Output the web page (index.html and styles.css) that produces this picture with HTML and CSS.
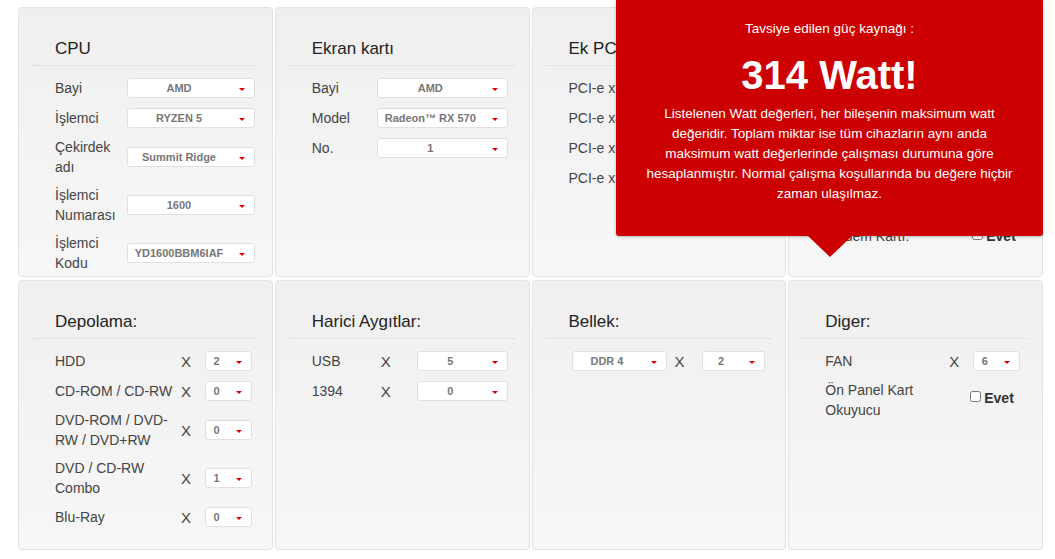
FILE: index.html
```html
<!DOCTYPE html>
<html lang="tr">

<head>
    <meta charset="UTF-8" />
    <meta name="viewport" content="width=device-width, initial-scale=1.0" />
    <title>Güç Kaynağı Hesaplama</title>
    <link rel="stylesheet" href="styles.css">
</head>

<body>
    <div class="calc">
        <div class="grid">

            <!-- CPU -->
            <div class="card">
                <h3 class="card-head">CPU</h3>
                <div class="card-body">
                    <div class="row cols-cpu">
                        <span class="lbl">Bayi</span>
                        <div class="sel"><span class="val">AMD</span><i class="caret"></i></div>
                    </div>
                    <div class="row cols-cpu">
                        <span class="lbl">İşlemci</span>
                        <div class="sel"><span class="val">RYZEN 5</span><i class="caret"></i></div>
                    </div>
                    <div class="row cols-cpu">
                        <span class="lbl">Çekirdek adı</span>
                        <div class="sel"><span class="val">Summit Ridge</span><i class="caret"></i></div>
                    </div>
                    <div class="row cols-cpu">
                        <span class="lbl">İşlemci Numarası</span>
                        <div class="sel"><span class="val">1600</span><i class="caret"></i></div>
                    </div>
                    <div class="row cols-cpu">
                        <span class="lbl">İşlemci Kodu</span>
                        <div class="sel"><span class="val">YD1600BBM6IAF</span><i class="caret"></i></div>
                    </div>
                </div>
            </div>

            <!-- Ekran karti -->
            <div class="card">
                <h3 class="card-head">Ekran kartı</h3>
                <div class="card-body">
                    <div class="row cols-gpu">
                        <span class="lbl">Bayi</span>
                        <div class="sel"><span class="val">AMD</span><i class="caret"></i></div>
                    </div>
                    <div class="row cols-gpu">
                        <span class="lbl">Model</span>
                        <div class="sel"><span class="val">Radeon™ RX 570</span><i class="caret"></i></div>
                    </div>
                    <div class="row cols-gpu">
                        <span class="lbl">No.</span>
                        <div class="sel"><span class="val">1</span><i class="caret"></i></div>
                    </div>
                </div>
            </div>

            <!-- Ek PCI -->
            <div class="card">
                <h3 class="card-head">Ek PCI Kartları</h3>
                <div class="card-body">
                    <div class="row cols-pci">
                        <span class="lbl">PCI-e x1</span>
                    </div>
                    <div class="row cols-pci">
                        <span class="lbl">PCI-e x4</span>
                    </div>
                    <div class="row cols-pci">
                        <span class="lbl">PCI-e x8</span>
                    </div>
                    <div class="row cols-pci">
                        <span class="lbl">PCI-e x16</span>
                    </div>
                </div>
            </div>

            <!-- Ek kartlar -->
            <div class="card">
                <h3 class="card-head">Diğer Kartlar:</h3>
                <div class="card-body card-body-late">
                    <div class="row cols-other">
                        <span class="lbl">Modem Kartı:</span>
                        <label class="chk"><input type="checkbox"> Evet</label>
                    </div>
                </div>
            </div>

            <!-- Depolama -->
            <div class="card">
                <h3 class="card-head">Depolama:</h3>
                <div class="card-body">
                    <div class="row cols-store">
                        <span class="lbl">HDD</span><span class="x">X</span>
                        <div class="sel"><span class="val">2</span><i class="caret"></i></div>
                    </div>
                    <div class="row cols-store">
                        <span class="lbl">CD-ROM / CD-RW</span><span class="x">X</span>
                        <div class="sel"><span class="val">0</span><i class="caret"></i></div>
                    </div>
                    <div class="row cols-store">
                        <span class="lbl">DVD-ROM / DVD-RW / DVD+RW</span><span class="x">X</span>
                        <div class="sel"><span class="val">0</span><i class="caret"></i></div>
                    </div>
                    <div class="row cols-store">
                        <span class="lbl">DVD / CD-RW Combo</span><span class="x">X</span>
                        <div class="sel"><span class="val">1</span><i class="caret"></i></div>
                    </div>
                    <div class="row cols-store">
                        <span class="lbl">Blu-Ray</span><span class="x">X</span>
                        <div class="sel"><span class="val">0</span><i class="caret"></i></div>
                    </div>
                </div>
            </div>

            <!-- Harici -->
            <div class="card">
                <h3 class="card-head">Harici Aygıtlar:</h3>
                <div class="card-body">
                    <div class="row cols-ext">
                        <span class="lbl">USB</span><span class="x">X</span>
                        <div class="sel"><span class="val">5</span><i class="caret"></i></div>
                    </div>
                    <div class="row cols-ext">
                        <span class="lbl">1394</span><span class="x">X</span>
                        <div class="sel"><span class="val">0</span><i class="caret"></i></div>
                    </div>
                </div>
            </div>

            <!-- Bellek -->
            <div class="card">
                <h3 class="card-head">Bellek:</h3>
                <div class="card-body">
                    <div class="row cols-mem">
                        <div class="sel"><span class="val">DDR 4</span><i class="caret"></i></div>
                        <span class="x">X</span>
                        <div class="sel"><span class="val">2</span><i class="caret"></i></div>
                    </div>
                </div>
            </div>

            <!-- Diger -->
            <div class="card">
                <h3 class="card-head">Diger:</h3>
                <div class="card-body">
                    <div class="row cols-misc">
                        <span class="lbl">FAN</span><span class="x">X</span>
                        <div class="sel"><span class="val">6</span><i class="caret"></i></div>
                    </div>
                    <div class="row cols-misc">
                        <span class="lbl">Ön Panel Kart Okuyucu</span><span></span>
                        <label class="chk"><input type="checkbox"> Evet</label>
                    </div>
                </div>
            </div>

        </div>

        <div class="result">
            <p class="result-sub">Tavsiye edilen güç kaynağı :</p>
            <p class="result-watt">314 Watt!</p>
            <p class="result-note">Listelenen Watt değerleri, her bileşenin maksimum watt değeridir. Toplam miktar ise tüm cihazların aynı anda maksimum watt değerlerinde çalışması durumuna göre hesaplanmıştır. Normal çalışma koşullarında bu değere hiçbir zaman ulaşılmaz.</p>
        </div>
    </div>
</body>

</html>
```

FILE: styles.css
```css
:root {
    --card-top: #efefef;
    --card-bottom: #f7f7f7;
    --card-border: #e2e2e2;
    --text: #444;
    --title: #222;
    --accent: #cc0000;
}

body {
    font-family: 'Liberation Sans', Arial, sans-serif;
    background: #fff;
    color: var(--text);
    margin: 0;
    padding: 0;
}

.calc {
    position: relative;
    width: 1025px;
    margin: 7px 0 0 18px;
}

.grid {
    display: grid;
    grid-template-columns: repeat(4, 1fr);
    grid-auto-rows: 270px;
    gap: 3px 2px;
}

.card {
    background: linear-gradient(to bottom, var(--card-top), var(--card-bottom));
    border: 1px solid var(--card-border);
    border-radius: 4px;
    padding: 30px 14px 0 13px;
    overflow: hidden;
}

.card-head {
    margin: 0;
    padding: 0 0 5px 23px;
    font-size: 17px;
    line-height: 22px;
    font-weight: normal;
    color: var(--title);
    border-bottom: 1px dotted #d6d6d6;
}

.card-body {
    display: flex;
    flex-direction: column;
    gap: 8px;
    padding: 11px 0 0 23px;
}

/* only the last row of this card shows below the popup */
.card-body-late {
    padding-top: 159px;
}

.row {
    display: grid;
    align-items: center;
    min-height: 22px;
}

.lbl {
    font-size: 14px;
    line-height: 20px;
}

.x {
    font-size: 15px;
}

.cols-cpu { grid-template-columns: 72px 128px; }
.cols-gpu { grid-template-columns: 65px 131px; }
.cols-pci { grid-template-columns: 92px; }
.cols-other { grid-template-columns: 150px 60px; }
.cols-store { grid-template-columns: 126px 24px 47px; }
.cols-ext { grid-template-columns: 69px 36px 91px; }
.cols-misc { grid-template-columns: 124px 24px 47px; }

.cols-mem {
    grid-template-columns: 95px 35px 63px;
    margin-left: 3px;
}

.cols-mem .x {
    padding-left: 8px;
}

.sel {
    position: relative;
    height: 20px;
    box-sizing: border-box;
    background: #fff;
    border: 1px solid #e0e0e0;
    border-radius: 3px;
    padding-right: 24px;
    display: flex;
    align-items: center;
    justify-content: center;
}

.val {
    font-size: 11px;
    font-weight: bold;
    color: #777;
    white-space: nowrap;
}

.caret {
    position: absolute;
    right: 9px;
    top: 9px;
    width: 0;
    height: 0;
    border-left: 3.5px solid transparent;
    border-right: 3.5px solid transparent;
    border-top: 3.5px solid #dd0000;
}

.chk {
    display: flex;
    align-items: center;
    margin-left: -3px;
    font-size: 14px;
    font-weight: bold;
    color: #333;
    white-space: nowrap;
}

.chk input {
    width: 11px;
    height: 11px;
    margin: 0 3px 4px 0;
}

.cols-misc .chk {
    margin-bottom: 4px;
}

/* Result popup */
.result {
    position: absolute;
    top: -7px;
    left: 598px;
    width: 427px;
    box-sizing: border-box;
    padding: 19px 27px 32px;
    background: var(--accent);
    color: #fff;
    text-align: center;
    border-radius: 0 0 3px 3px;
    box-shadow: 0 1px 3px rgba(0, 0, 0, 0.25);
}

.result::after {
    content: "";
    position: absolute;
    left: 50%;
    bottom: -21px;
    margin-left: -22px;
    border-left: 22px solid transparent;
    border-right: 22px solid transparent;
    border-top: 21px solid var(--accent);
}

.result p {
    margin: 0;
}

.result-sub {
    font-size: 13.5px;
    line-height: 20px;
}

.result-watt {
    margin-top: 13px !important;
    font-size: 40px;
    line-height: 46px;
    font-weight: bold;
}

.result-note {
    margin-top: 6px !important;
    font-size: 13.5px;
    line-height: 20px;
}
```
